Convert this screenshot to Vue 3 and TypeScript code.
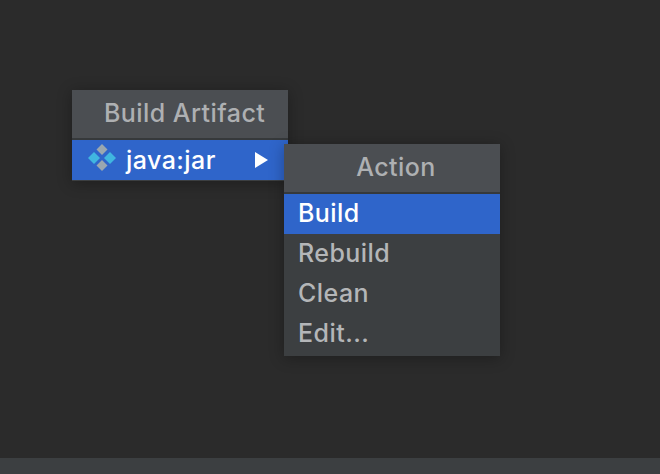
<template>
  <div class="screen">
    <div class="canvas">
      <div class="popup first">
        <div class="popup-title indented">Build Artifact</div>
        <div class="popup-row selected">
          <svg class="artifact-icon" width="28" height="28" viewBox="0 0 28 28">
            <path d="M14 0l5.500 5.500L14 11 8.500 5.500z" fill="#9aa7b0" />
            <path d="M14 16l5.500 5.500L14 27l-5.500-5.500z" fill="#9aa7b0" />
            <path d="M6 8l6 6-6 6-6-6z" fill="#40b6e0" />
            <path d="M22 8l6 6-6 6-6-6z" fill="#40b6e0" />
          </svg>
          <span class="row-label">java:jar</span>
          <svg class="arrow" width="13" height="16" viewBox="0 0 13 16">
            <path d="M0 0l13 8-13 8z" fill="#fff" />
          </svg>
        </div>
      </div>

      <div class="popup second">
        <div class="popup-title centered">Action</div>
        <div
          v-for="(action, i) in actions"
          :key="action"
          class="popup-row plain"
          :class="{ selected: i === 0 }"
        >{{ action }}</div>
      </div>
    </div>
    <div class="status-bar"></div>
  </div>
</template>

<script setup lang="ts">
const actions: string[] = ['Build', 'Rebuild', 'Clean', 'Edit...']
</script>

<style>
html, body { margin: 0; background: #2b2b2b; }
</style>

<style scoped>
.screen {
  width: 660px;
  height: 474px;
  display: flex;
  flex-direction: column;
  overflow: hidden;
  font-family: Inter, "Liberation Sans", sans-serif;
  font-size: 25px;
  font-weight: 500;
  letter-spacing: 0.45px;
}
.canvas {
  flex: 1;
  position: relative;
  background: #2b2b2b;
}
.status-bar {
  height: 16px;
  background: #3c3f41;
}
.popup {
  position: absolute;
  width: 216px;
  background: #3c3f41;
  box-shadow: 0 2px 14px #0000004d;
}
.first { left: 72px; top: 90px; }
.second { left: 284px; top: 144px; padding-bottom: 2px; }
.popup-title {
  height: 48px;
  line-height: 46px;
  background: #4b4e52;
  color: #aeb0b2;
  border-bottom: 2px solid #36393b;
}
.indented { padding-left: 32px; }
.centered { text-align: center; padding-left: 8px; width: 208px; }
.popup-row {
  height: 40px;
  display: flex;
  align-items: center;
  color: #b4b6b8;
}
.popup-row.plain { padding-left: 14px; padding-bottom: 2px; height: 38px; }
.popup-row.selected {
  background: #2f65ca;
  color: #fff;
}
.first .popup-row { border-bottom: 1px solid #3c3f41; }
.artifact-icon { margin-left: 16px; margin-bottom: 4px; }
.row-label { margin-left: 10px; padding-bottom: 1px; }
.arrow { margin-left: auto; margin-right: 20px; }
</style>
